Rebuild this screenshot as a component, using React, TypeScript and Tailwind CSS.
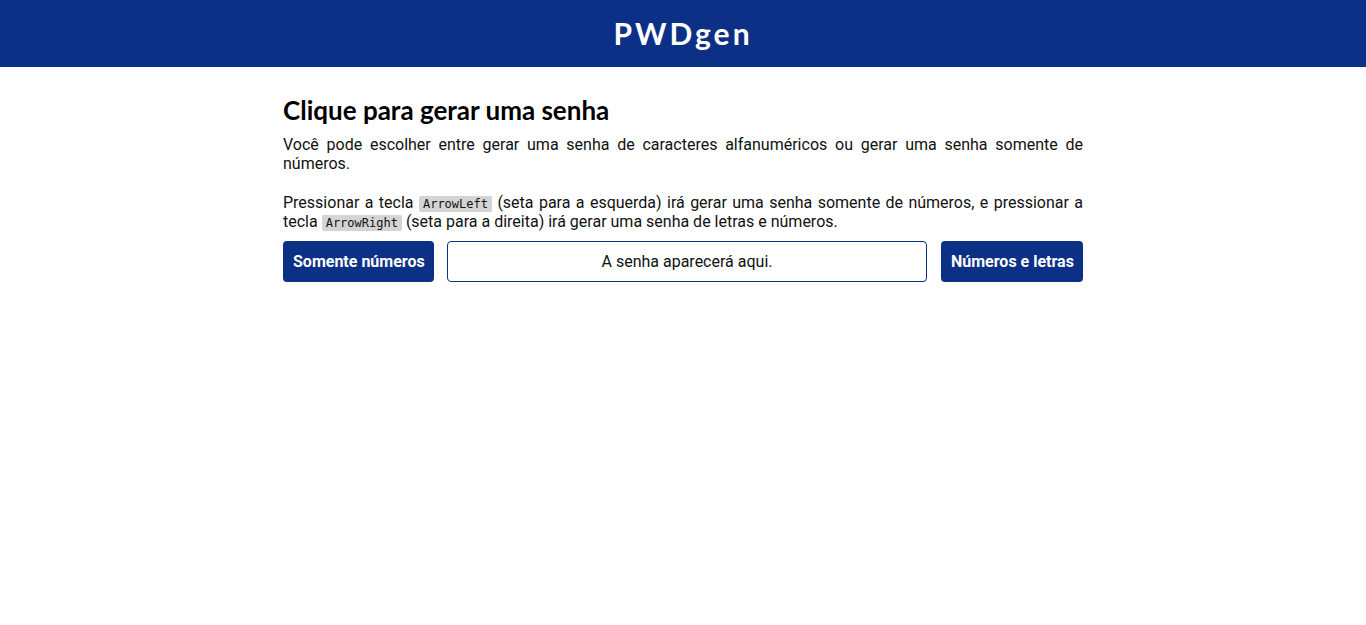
import React from "react";

export default function App() {
  return (
    <div className="min-h-screen bg-white text-black">
      <header className="h-[67px] bg-[#0c3085] flex items-center justify-center">
        <h1 className="text-white text-[30px] font-bold tracking-[3px] font-['Lato','Open_Sans',sans-serif]">
          PWDgen
        </h1>
      </header>
      <main className="w-[800px] mx-auto pt-[28px] font-['Roboto',sans-serif]">
        <h2 className="text-[26px] leading-[30px] font-bold font-['Lato','Open_Sans',sans-serif] mb-[10px]">
          Clique para gerar uma senha
        </h2>
        <p className="text-[16px] leading-[19px] text-justify text-[#111]">
          Você pode escolher entre gerar uma senha de caracteres alfanuméricos ou gerar uma senha somente de números.
        </p>
        <p className="text-[16px] leading-[19px] text-justify mt-[20px] text-[#111]">
          Pressionar a tecla{" "}
          <code className="font-['DejaVu_Sans_Mono',monospace] text-[12px] leading-[12px] bg-[#d4d4d4] px-[4px] py-[1px] rounded-[2px]">ArrowLeft</code>{" "}
          (seta para a esquerda) irá gerar uma senha somente de números, e pressionar a tecla{" "}
          <code className="font-['DejaVu_Sans_Mono',monospace] text-[12px] leading-[12px] bg-[#d4d4d4] px-[4px] py-[1px] rounded-[2px]">ArrowRight</code>{" "}
          (seta para a direita) irá gerar uma senha de letras e números.
        </p>
        <div className="flex items-stretch gap-[13px] mt-[10px] h-[41px]">
          <button className="bg-[#0c3085] text-white font-bold text-[16px] rounded-[4px] px-[10px] w-[151px] whitespace-nowrap">
            Somente números
          </button>
          <div className="flex-1 border border-[#0c3085] rounded-[4px] flex items-center justify-center text-[16px] text-[#111]">
            A senha aparecerá aqui.
          </div>
          <button className="bg-[#0c3085] text-white font-bold text-[16px] rounded-[4px] px-[10px] w-[142px] ml-[1px] whitespace-nowrap">
            Números e letras
          </button>
        </div>
      </main>
    </div>
  );
}
